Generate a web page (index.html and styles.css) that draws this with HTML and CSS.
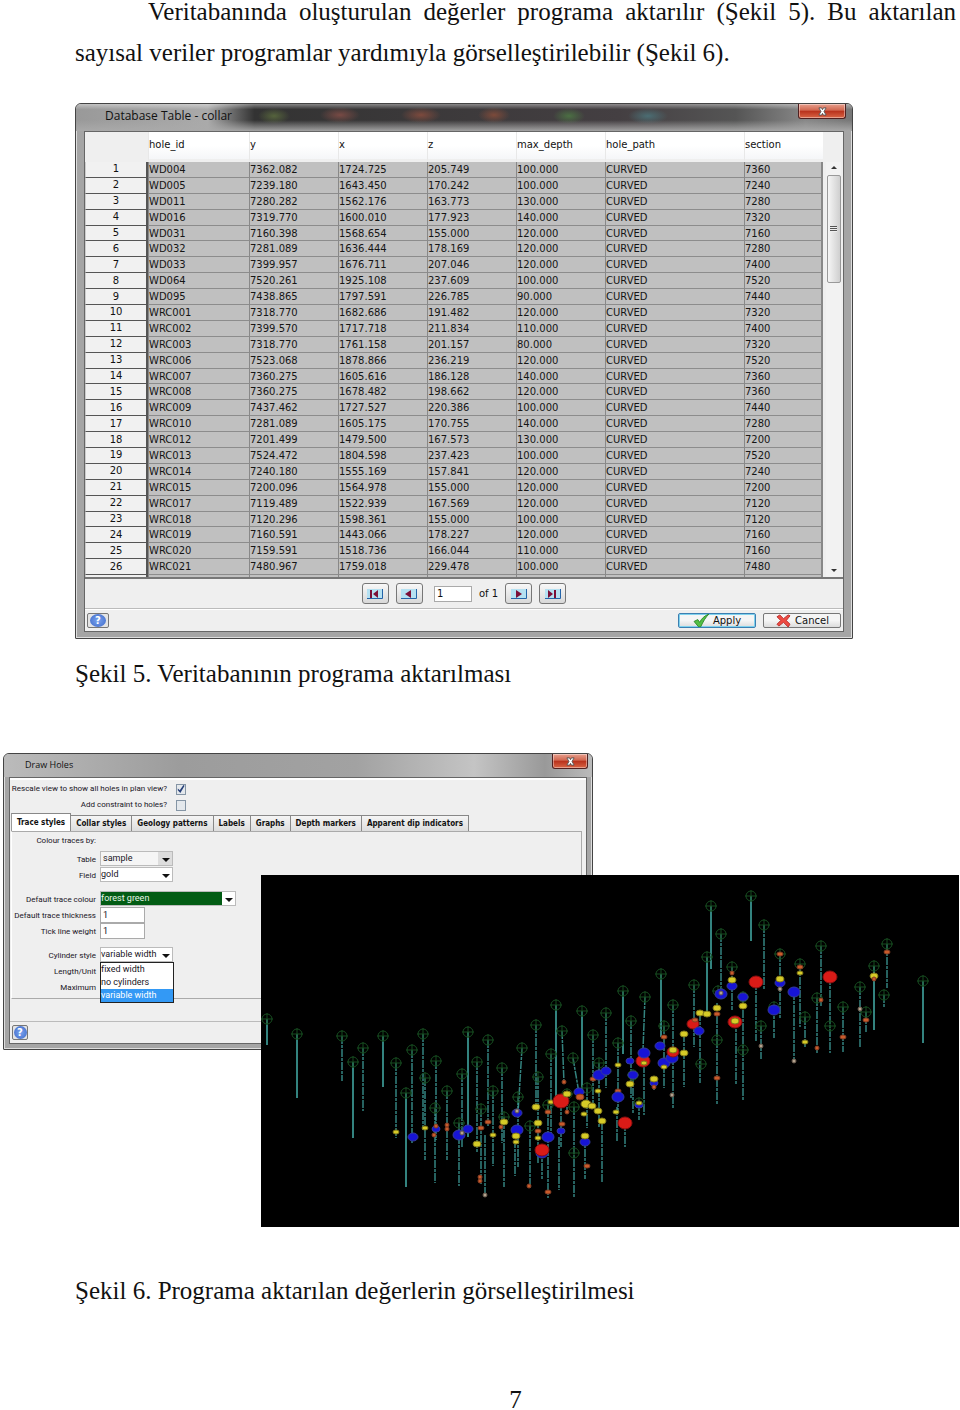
FILE: index.html
```html
<!DOCTYPE html>
<html lang="tr">
<head>
<meta charset="utf-8">
<title>Veritabanının programa aktarılması</title>
<link rel="stylesheet" href="styles.css">
</head>
<body>
<main class="page">
  <p class="lead">Veritabanında oluşturulan değerler programa aktarılır (Şekil 5). Bu aktarılan sayısal veriler programlar yardımıyla görselleştirilebilir (Şekil 6).</p>

  <figure class="figure figure-table">
    <section class="dialog collar" aria-label="Database Table - collar">
      <header class="titlebar dark">
        <span class="title">Database Table - collar</span>
        <button class="close" type="button" aria-label="Close"><svg viewBox="0 0 12 10"><path d="M2 1h3l1 2 1-2h3L7.700 5 10 9H7L6 7 5 9H2l2.300-4z"/></svg></button>
      </header>
      <div class="client">
        <div class="sheet">
          <table>
            <colgroup><col class="c-num"><col class="c-id"><col class="c-val"><col class="c-val"><col class="c-val"><col class="c-val"><col class="c-path"><col></colgroup>
            <thead><tr><td></td><th scope="col">hole_id</th><th scope="col">y</th><th scope="col">x</th><th scope="col">z</th><th scope="col">max_depth</th><th scope="col">hole_path</th><th scope="col">section</th></tr></thead>
            <tbody id="rows"></tbody>
          </table>
          <div class="scroll" aria-hidden="true"><span class="up"></span><span class="thumb"></span><span class="down"></span></div>
        </div>
        <nav class="pager" aria-label="Pages">
          <button type="button" aria-label="First"><svg viewBox="0 0 18 12"><path class="tray" d="M1 1h15v10H1z"/><path class="edge" d="M1 10.500h15.500V1"/><path class="mark" d="M4 2h2v8H4zM12 2v8L7 6z"/></svg></button>
          <button type="button" aria-label="Previous"><svg viewBox="0 0 18 12"><path class="tray" d="M1 1h15v10H1z"/><path class="edge" d="M1 10.500h15.500V1"/><path class="mark" d="M11 2v8L5 6z"/></svg></button>
          <input type="text" value="1" aria-label="Page"><span>of 1</span>
          <button type="button" aria-label="Next"><svg viewBox="0 0 18 12"><path class="tray" d="M1 1h15v10H1z"/><path class="edge" d="M1 10.500h15.500V1"/><path class="mark" d="M6 2v8l6-4z"/></svg></button>
          <button type="button" aria-label="Last"><svg viewBox="0 0 18 12"><path class="tray" d="M1 1h15v10H1z"/><path class="edge" d="M1 10.500h15.500V1"/><path class="mark" d="M4 2v8l5-4zM10 2h2v8h-2z"/></svg></button>
        </nav>
        <footer class="actions">
          <button class="help" type="button" aria-label="Help"><span>?</span></button>
          <button class="action primary" type="button"><svg viewBox="0 0 18 14"><path class="tick" d="M1 8l4-2 2 3c2-4 5-7 10-9-4 4-6 8-9 14H6z"/></svg>Apply</button>
          <button class="action" type="button"><svg viewBox="0 0 18 14"><path class="cross" d="M2 3l3-2 4 4 5-4 2 1-4 5 4 4-2 3-5-5-5 4-2-2 4-4z"/></svg>Cancel</button>
        </footer>
      </div>
    </section>
    <figcaption>Şekil 5. Veritabanının programa aktarılması</figcaption>
  </figure>

  <figure class="figure figure-plot">
    <div class="stage">
      <section class="dialog holes" aria-label="Draw Holes">
        <header class="titlebar">
          <span class="title">Draw Holes</span>
          <button class="close" type="button" aria-label="Close"><svg viewBox="0 0 12 10"><path d="M2 1h3l1 2 1-2h3L7.700 5 10 9H7L6 7 5 9H2l2.300-4z"/></svg></button>
        </header>
        <div class="client">
          <div class="checks">
            <label for="rescale">Rescale view to show all holes in plan view?</label><input id="rescale" type="checkbox" checked>
            <label for="constraint">Add constraint to holes?</label><input id="constraint" type="checkbox">
          </div>
          <div class="tabs" role="tablist">
            <button type="button" role="tab" aria-selected="true">Trace styles</button><button type="button" role="tab">Collar styles</button><button type="button" role="tab">Geology patterns</button><button type="button" role="tab">Labels</button><button type="button" role="tab">Graphs</button><button type="button" role="tab">Depth markers</button><button type="button" role="tab">Apparent dip indicators</button>
          </div>
          <div class="panel">
            <div class="fields first"><span>Colour traces by:</span></div>
            <div class="fields">
              <label for="tbl">Table</label><span class="pick raised"><select id="tbl"><option>sample</option></select></span>
              <label for="fld">Field</label><span class="pick"><select id="fld"><option>gold</option></select></span>
            </div>
            <div class="fields">
              <label for="colour">Default trace colour</label><span class="pick wide"><select id="colour"><option>forest green</option></select></span>
              <label for="thick">Default trace thickness</label><input id="thick" type="text" value="1">
              <label for="weight">Tick line weight</label><input id="weight" type="text" value="1">
            </div>
            <div class="fields">
              <label for="cyl">Cylinder style</label>
              <span class="pick"><select id="cyl"><option>variable width</option></select>
                <span class="menu" role="listbox" aria-label="Cylinder style"><span role="option">fixed width</span><span role="option">no cylinders</span><span role="option" aria-selected="true">variable width</span></span>
              </span>
              <span class="name">Length/Unit</span><span></span>
              <span class="name">Maximum</span><span></span>
            </div>
          </div>
          <footer class="actions"><button class="help" type="button" aria-label="Help"><span>?</span></button></footer>
        </div>
      </section>
      <svg id="plot" class="plot" viewBox="261 875 698 352" role="img" aria-label="Drill holes">
        <defs>
          <g id="collar-mark"><circle r="5"/><path d="M-6 0H6M0-6V6"/></g>
        </defs>
      </svg>
    </div>
    <figcaption>Şekil 6. Programa aktarılan değerlerin görselleştirilmesi</figcaption>
  </figure>
  <footer class="folio">7</footer>
</main>
<script src="script.js"></script>
</body>
</html>
```

FILE: styles.css
```css
* { box-sizing: border-box; }
body { margin: 0; background: #fff; color: #111; font-family: "Liberation Serif", serif; font-size: 25px; line-height: 41px; }
.page { display: flow-root; }
.lead { margin: -9px 4px 0 75px; text-indent: 73px; text-align: justify; }
.figure { margin: 0; }
.figure-table { margin: 30px 107px 0 75px; }
.figure-table figcaption { margin-top: 14px; }
.figure-plot { margin-top: 59px; }
.figure-plot figcaption { margin: 43px 0 0 75px; }
.folio { margin: 79px 4px 0 75px; text-align: center; line-height: 20px; }
button, input, select { font: inherit; color: inherit; margin: 0; padding: 0; border-radius: 0; }

.dialog { border: 1px solid #444; border-radius: 6px 6px 1px 1px; background: #a5a5a5; box-shadow: inset 0 0 0 1px #ddd; font-family: "DejaVu Sans", sans-serif; font-size: 10px; line-height: 12px; }
.titlebar { display: flex; justify-content: space-between; align-items: flex-start; height: 27px; border-radius: 5px 5px 0 0; background: linear-gradient(90deg, #bbb, #9c9c9c 30%, #a2a2a2 60%, #c4c4c4 80%, #999 92%, #bbb); font-family: "Open Sans", sans-serif; }
.titlebar.dark { background: linear-gradient(#fff6, #fff0 20%, #fff0 60%, #aaaaaaee), radial-gradient(ellipse 16px 8px at 198px 12px, #55633c, #55633c00), radial-gradient(ellipse 20px 8px at 264px 11px, #784a44, #784a4400), radial-gradient(ellipse 20px 8px at 345px 11px, #7d4a3d, #7d4a3d00), radial-gradient(ellipse 16px 8px at 418px 11px, #7c4a3a, #7c4a3a00), radial-gradient(ellipse 16px 8px at 493px 12px, #4b6f43, #4b6f4300), radial-gradient(ellipse 20px 8px at 572px 12px, #4b6d73, #4b6d7300), linear-gradient(90deg, #999, #aaa 17%, #333 23%, #443f42 70%, #555 85%, #888 94%, #777); }
.holes .titlebar { height: 23px; }
.title { color: #111; white-space: nowrap; }
.collar .title { padding: 4px 0 0 29px; font-size: 12px; line-height: 16px; }
.holes .title { padding: 4px 0 0 21px; font-size: 9px; line-height: 14px; }
.close { display: grid; place-items: center; width: 48px; height: 15px; margin-right: 6px; border: 1px solid #502020; border-top: 0; border-radius: 0 0 3px 3px; background: linear-gradient(#e8a08e, #d0664f 45%, #b8301b 50%, #d86545); box-shadow: inset 0 0 0 1px #ffffff66; }
.holes .close { width: 36px; margin-right: 4px; }
.close svg { width: 11px; height: 9px; fill: #fff; stroke: #555; stroke-width: 1; }
.client { margin: 0 8px 6px; border: 1px solid #666; background: #efefef; }
.holes .client { margin: 0 5px 5px; box-shadow: inset 0 2px #fff; }

.sheet { display: flex; height: 447px; overflow: hidden; border-bottom: 2px solid #777; }
table { flex: 1; min-width: 0; border-collapse: separate; border-spacing: 0; table-layout: fixed; height: 458px; }
.c-num { width: 63px; }
.c-id { width: 101px; }
.c-val { width: 89px; }
.c-path { width: 139px; }
th { font-weight: normal; text-align: left; padding: 0; white-space: nowrap; }
td { padding: 0; white-space: nowrap; }
thead tr { height: 30px; }
thead th { padding: 0 0 1px; background: linear-gradient(#fff 50%, #f5f6f8); border-left: 1px solid #e8e8e8; border-bottom: 3px solid #efefef; }
tbody td { padding-top: 1px; color: #151515; background: #c0c0c0; border-left: 1px solid #888; border-bottom: 1px solid #8c8c8c; }
tbody th { text-align: center; background: #f1f1f1; border-bottom: 1px solid #555; border-right: 2px solid #555; border-left: 1px solid #ccc; }
tbody td:last-child { border-right: 2px solid #888; }
.scroll { display: flex; flex-direction: column; align-items: center; width: 15px; margin: 30px 2px 0 3px; background: #f2f2f2; }
.thumb { width: 14px; height: 108px; border: 1px solid #999; border-radius: 2px; background: repeating-linear-gradient(#555 0 1px, #eee 1px 2px) center 50px / 7px 6px no-repeat, linear-gradient(90deg, #f5f5f5, #cfcfcf); }
.up, .down { border: 3px solid transparent; }
.up { margin: 1px 0 6px; border-bottom-color: #333; }
.down { margin: auto 0 2px; border-top-color: #333; }

.pager { display: flex; align-items: center; justify-content: center; gap: 7px; height: 30px; border-bottom: 1px solid #bbb; }
.pager button { display: grid; place-items: center; width: 27px; height: 21px; border: 1px solid #777; border-radius: 3px; background: linear-gradient(#f8f8f8, #d8d8d8); }
.pager svg { width: 18px; height: 12px; }
.tray { fill: #b5e1f2; }
.edge { fill: none; stroke: #2464a8; }
.mark { fill: #7c1038; }
.pager input { width: 38px; height: 16px; margin-left: 4px; padding-left: 2px; border: 1px solid #aaa; background: #fff; }
.actions { display: flex; align-items: center; gap: 7px; height: 22px; padding: 0 2px; border-top: 1px solid #fff; }
.help { display: grid; place-items: center; width: 22px; height: 15px; margin-right: auto; border: 1px solid #777; border-radius: 2px; background: #e4e4e4; }
.help span { width: 16px; height: 13px; border-radius: 50%; background: radial-gradient(#7ba4ee, #3c67c8); color: #fff; font: bold 10px/13px "DejaVu Sans", sans-serif; }
.action { display: flex; align-items: center; justify-content: center; gap: 3px; width: 78px; height: 15px; border: 1px solid #777; border-radius: 2px; background: linear-gradient(#f5f5f5 50%, #dcdcdc); }
.primary { border-color: #3c7fb1; box-shadow: inset 0 0 0 1px #7fd2ee; }
.action svg { width: 17px; height: 13px; }
.tick { fill: #55bf45; stroke: #2d8a2b; }
.cross { fill: #ee4b42; stroke: #b82b29; }

.stage { position: relative; padding-bottom: 177px; }
.holes { width: 590px; max-width: 100%; margin-left: 3px; color: #201525; font-family: Roboto, sans-serif; font-size: 9px; }
.checks { display: grid; grid-template-columns: 157px 11px; column-gap: 8px; padding-top: 3px; align-items: center; justify-items: end; line-height: 16px; white-space: nowrap; font-size: 8px; }
.checks input { appearance: none; width: 10px; height: 11px; border: 1px solid #8595a5; background: #e4e8ec; }
.checks input:checked::before { content: ""; display: block; width: 8px; height: 9px; background: #263f78; clip-path: polygon(10% 45%, 35% 65%, 80% 5%, 95% 15%, 42% 95%, 10% 65%); }
.tabs { display: flex; align-items: flex-end; height: 18px; padding-left: 1px; font-family: "DejaVu Sans Condensed", "DejaVu Sans", sans-serif; font-size: 8px; font-weight: bold; color: #111; }
.tabs button { height: 16px; padding: 0 5px; border: 1px solid #888; border-left: 0; border-bottom: 0; background: linear-gradient(#f5f5f5, #ddd); white-space: nowrap; }
.tabs button[aria-selected] { height: 18px; border-left: 1px solid #999; background: #fff; }
.panel { margin: 0 4px 0 1px; padding-bottom: 3px; border: 1px solid #aaa; border-left-color: #fff; }
.fields { display: grid; grid-template-columns: 84px 1fr; grid-auto-rows: 16px; column-gap: 4px; margin-bottom: 8px; line-height: 17px; white-space: nowrap; }
.fields.first { margin-bottom: 3px; }
.fields:last-child { margin-bottom: 0; }
.fields label, .name, .first span { justify-self: end; font-size: 8px; }
.fields > input { width: 45px; height: 16px; padding-left: 2px; border: 1px solid #aaa; background: #fff; }
.pick { position: relative; width: 73px; height: 15px; }
.pick select { appearance: none; display: block; width: 100%; height: 15px; border: 1px solid #bbb; background: #fff; line-height: 13px; }
.raised select { padding-left: 2px; background: linear-gradient(90deg, #f5f5f5 57px, #ddd 57px); }
.pick::after { content: ""; position: absolute; right: 3px; top: 7px; border: 4px solid transparent; border-top-color: #111; border-bottom: 0; }
.pick.wide { width: 136px; }
.wide select { color: #e8f5e8; background: linear-gradient(90deg, #025c14 121px, #fff 121px); }
.menu { position: absolute; z-index: 1; top: 15px; left: 0; display: grid; width: 74px; border: 1px solid #222; background: #fff; line-height: 13px; }
.menu [aria-selected] { background: #3399f5; color: #fff; }
.holes .actions { margin-top: 22px; height: 22px; border-top: 1px solid #bbb; }
.holes .help { width: 16px; }
.holes .help span { width: 13px; }
.plot { position: absolute; top: 122px; left: 261px; width: calc(100% - 262px); background: #000; }
.trace { stroke: #3d9b96; stroke-width: 1.500; opacity: .85; }
.dashed { stroke-dasharray: 8 1 3 1; }
.solid { stroke-width: 2; }
.ring { fill: none; stroke: #174d20; }
.r { fill: #d91b17; stroke: #8c1010; }
.b { fill: #1714d5; stroke: #343b98; }
.y { fill: #d6cb27; stroke: #807719; }
.o { fill: #c95b2b; stroke: #843c22; }
.w { fill: #b4a28d; stroke: #655649; }
```

FILE: script.js
```js
const collars = `WD004 7362.082 1724.725 205.749 100.000 7360
WD005 7239.180 1643.450 170.242 100.000 7240
WD011 7280.282 1562.176 163.773 130.000 7280
WD016 7319.770 1600.010 177.923 140.000 7320
WD031 7160.398 1568.654 155.000 120.000 7160
WD032 7281.089 1636.444 178.169 120.000 7280
WD033 7399.957 1676.711 207.046 120.000 7400
WD064 7520.261 1925.108 237.609 100.000 7520
WD095 7438.865 1797.591 226.785 90.000 7440
WRC001 7318.770 1682.686 191.482 120.000 7320
WRC002 7399.570 1717.718 211.834 110.000 7400
WRC003 7318.770 1761.158 201.157 80.000 7320
WRC006 7523.068 1878.866 236.219 120.000 7520
WRC007 7360.275 1605.616 186.128 140.000 7360
WRC008 7360.275 1678.482 198.662 120.000 7360
WRC009 7437.462 1727.527 220.386 100.000 7440
WRC010 7281.089 1605.175 170.755 140.000 7280
WRC012 7201.499 1479.500 167.573 130.000 7200
WRC013 7524.472 1804.598 237.423 100.000 7520
WRC014 7240.180 1555.169 157.841 120.000 7240
WRC015 7200.096 1564.978 155.000 120.000 7200
WRC017 7119.489 1522.939 167.569 120.000 7120
WRC018 7120.296 1598.361 155.000 100.000 7120
WRC019 7160.591 1443.066 178.227 120.000 7160
WRC020 7159.591 1518.736 166.044 110.000 7160
WRC021 7480.967 1759.018 229.478 100.000 7480`;

const body = document.getElementById('rows');
collars.split('\n').forEach((line, i) => {
  const cells = line.split(' ');
  cells.splice(5, 0, 'CURVED');
  body.insertAdjacentHTML('beforeend', `<tr><th scope="row">${i + 1}</th>${cells.map(c => `<td>${c}</td>`).join('')}</tr>`);
});
body.insertAdjacentHTML('beforeend', `<tr><th scope="row">27</th>${'<td></td>'.repeat(7)}</tr>`);

// x, top, bottom, and the x of the lower end where the hole is inclined
const holes = [
  [267,1019,1045],[297,1034,1098],[342,1036,1081],[353,1062,1138],[363,1048,1111],[383,1036,1087],[396,1063,1138],[406,1093,1187],
  [412,1050,1143],[423,1034,1130],[425,1078,1160],[436,1061,1140],[435,1108,1183],[447,1091,1160],[462,1074,1148],[459,1123,1186],
  [468,1032,1137],[477,1062,1153],[481,1109,1184],[488,1040,1127],[485,1135,1197],[493,1091,1166],[502,1068,1143],[504,1117,1187],
  [522,1048,1113,518],[518,1097,1167],[515,1140,1176],[530,1126,1188],[536,1025,1107],[538,1077,1163],[542,1150,1179],[548,1105,1198],
  [551,1054,1133],[556,1005,1097],[561,1103,1147],[562,1031,1083,564],[567,1094,1113],[559,1137,1190],[573,1058,1093,579],[582,1011,1093],
  [574,1107,1198],[587,1088,1128],[585,1136,1179],[593,1035,1103],[599,1063,1127],[606,1013,1088],[602,1122,1183],[618,1043,1113],
  [617,1107,1141],[623,991,1054],[625,1123,1147],[631,1021,1098],[633,1075,1113],[639,1103,1120],[645,997,1050,643],[644,1052,1115],
  [654,1079,1090],[661,974,1037],[664,1026,1088],[673,1005,1108],[684,1034,1087],[694,985,1047],[700,1013,1083],[707,957,1013],
  [717,1040,1105],[711,906,969],[721,934,993],[717,1003,1040],[751,896,941],[764,925,989],[732,967,1010],[743,997,1100],[736,1020,1085],
  [756,982,1041],[761,1026,1059],[774,1007,1038],[780,954,1018],[794,992,1063],[800,964,1027],[805,1017,1047],[817,998,1053],
  [821,946,1006],[830,977,1053],[843,1007,1052],[860,987,1048],[866,1012,1032],[874,966,1030],[887,944,988],[884,995,1008],[923,981,1043]
];
const bare = new Set(['485,1135', '515,1140', '542,1150', '561,1103', '559,1137', '585,1136', '602,1122', '617,1107', '625,1123', '644,1052', '654,1079', '684,1034', '700,1013', '756,982', '830,977', '736,1020', '717,1003', '794,992']);
const solid = new Set([267, 297, 353, 383, 406, 468, 556, 582, 623, 661, 707, 711, 751, 874, 923]);
const extraRings = [[574,1153],[701,1064],[718,991],[743,1050],[830,1026]];

// colour, x, y, radius
const samples = [
  'y396,1132,3','b413,1137,5','y425,1128,3','b436,1129,4','o436,1126,2','o434,1135,2','o447,1125,2','o447,1129,2','b459,1135,6','b468,1129,5','w462,1133,2',
  'y477,1144,4','o481,1128,3','o480,1177,2','o480,1181,2','o488,1122,3','w485,1195,2','y493,1135,3','y504,1122,4','o501,1127,2','b517,1113,5','w517,1111,2',
  'b517,1130,6','y516,1136,4','y516,1142,3','o529,1186,2','y536,1107,4','y538,1123,4','o538,1131,3','y538,1138,3','b542,1153,6','r542,1150,7','o548,1112,3','b548,1137,6','o548,1192,3',
  'y551,1102,3','r561,1101,8','o562,1124,3','b561,1131,4','o564,1082,2','y567,1094,4','o567,1112,2','b579,1092,5','o580,1097,4','y586,1104,5','y592,1106,4','y598,1111,4','y584,1114,3',
  'b585,1142,5','y585,1136,4','o587,1166,3','o593,1079,3','b599,1075,6','y598,1091,3','b606,1071,5','y602,1121,4','y618,1065,3','o618,1091,3','b618,1097,6','y616,1112,3',
  'r625,1123,7','b630,1061,4','y630,1084,4','b633,1075,5','b639,1105,4','y639,1103,3','r643,1061,7','b644,1053,6','y644,1063,3','b654,1083,4','y654,1079,4','o654,1087,2',
  'o664,1037,3','b660,1046,5','b664,1063,6','y664,1067,3','b672,1058,6','r673,1052,6','y673,1050,4','w672,1095,2','y684,1034,4','y684,1053,4','r693,1024,6','o695,1020,3','b699,1031,5',
  'y700,1013,4','y707,1014,4','o717,1078,3','b721,994,6','w721,993,2','y717,1008,4','o717,1014,3','o732,973,2','b732,986,5','y732,980,4','b743,997,5','y743,1006,4','r735,1022,7','y735,1021,4',
  'r756,982,7','w761,1046,2','b774,1010,6','o780,954,3','b780,983,5','y780,979,4','w780,989,2','b794,992,6','w794,1061,2','y800,973,3','o800,967,3','y805,1042,3','o817,1048,2','o821,1000,2',
  'r830,977,7','o843,1037,3','w860,1009,2','o866,1020,3','y874,976,4','o874,979,2','o887,952,3'
];

let marks = '';
for (const [x, top, bottom, foot = x] of holes) {
  marks += `<line class="trace ${solid.has(x) ? 'solid' : 'dashed'}" x1="${x}" y1="${top}" x2="${foot}" y2="${bottom}"/>`;
}
for (const [x, top] of [...holes.filter(h => !bare.has(h[0] + ',' + h[1])), ...extraRings]) {
  marks += `<use class="ring" href="#collar-mark" x="${x}" y="${top}"/>`;
}
for (const s of samples) {
  const [x, y, r] = s.slice(1).split(',').map(Number);
  marks += `<ellipse class="${s[0]}" cx="${x}" cy="${y}" rx="${r}" ry="${Math.max(2, r - 1)}"/>`;
}
document.getElementById('plot').insertAdjacentHTML('beforeend', marks);
```
